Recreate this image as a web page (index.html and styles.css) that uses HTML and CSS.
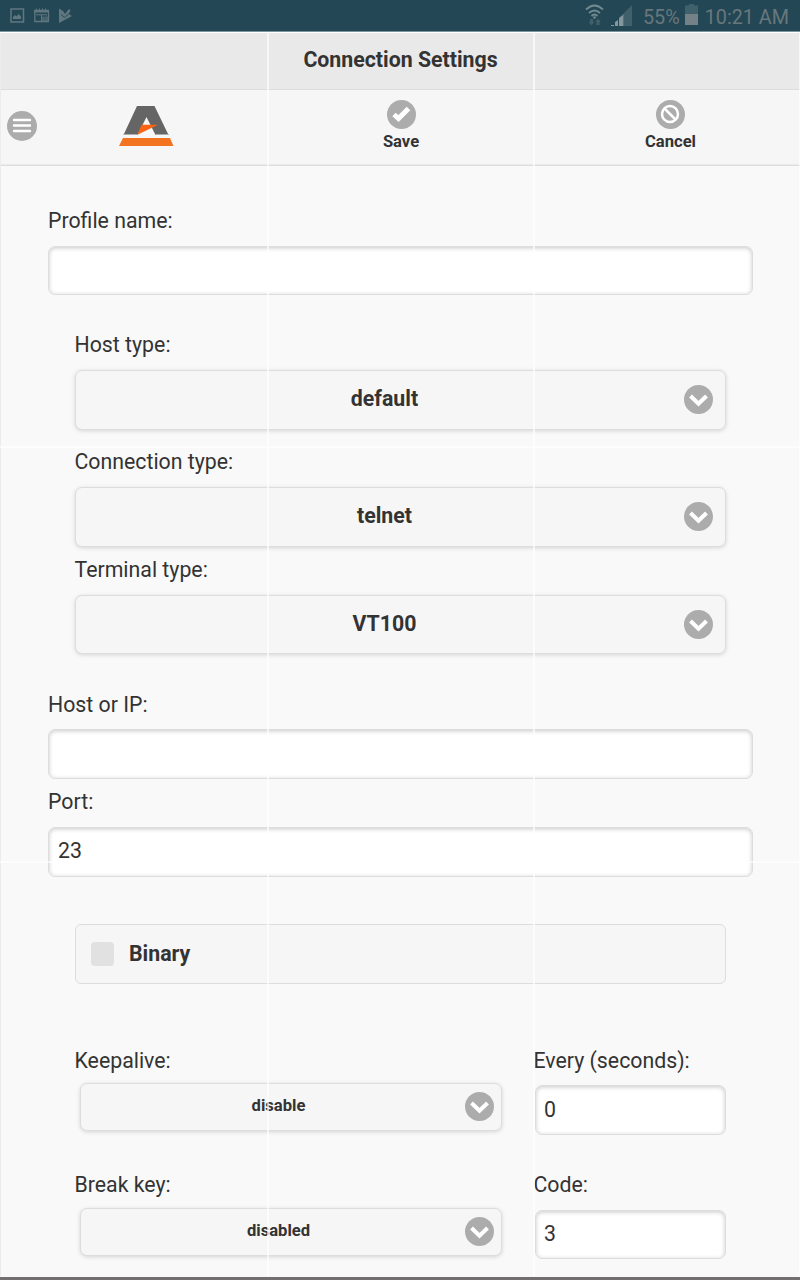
FILE: index.html
```html
<!DOCTYPE html>
<html lang="en">
<head>
<meta charset="utf-8">
<title>Connection Settings</title>
<link rel="stylesheet" href="styles.css">
</head>
<body>
<svg class="defs" width="0" height="0">
  <symbol id="chevron" viewBox="0 0 29 29"><circle cx="14.500" cy="14.500" r="14.500" fill="#acacac"/><path d="m6.500 11 8 7.800 8-7.800" fill="none" stroke="#fff" stroke-width="4"/></symbol>
</svg>
<div class="screen">
  <div class="status">
    <div class="notices">
      <svg width="15" height="15" viewBox="0 0 15 15"><path d="M1 1h12.500v13H1z" fill="none" stroke="#617780" stroke-width="1.500"/><path d="M3 11V9l2-2 1.500 1.500L8.500 6 11 8.500V11z" fill="#617780"/></svg>
      <svg width="16" height="15" viewBox="0 0 16 15"><path d="M.8 2.500h13.700v11H.8z" fill="none" stroke="#617780" stroke-width="1.300"/><path d="M0 2h15v2.500H0zM2 .5h1V2H2zM5 .5h1V2H5zM8 .5h1V2H8zM11 .5h1V2h-1zM2 6.300h11v1H2zM7 7h1v6H7z" fill="#617780"/><path d="M8 8.500h6v5H8z" fill="#617780" opacity=".6"/></svg>
      <svg width="14" height="15" viewBox="0 0 14 15"><path d="M0 .5 4 3l2 3 4-5 1.500 1.500L9.500 6 13 8 0 15z" fill="#617780"/><path d="m2 6.500 3.500 3L9.500 6" fill="none" stroke="#234754"/></svg>
    </div>
    <div class="system">
      <svg class="wifi" width="20" height="22" viewBox="0 0 20 22"><g fill="none" stroke="#728a92" stroke-width="1.800"><path d="M1 5.500q8.500-8 17 0M4 9q5.500-5 11 0M6.500 12q3-3 6 0"/></g><circle cx="9.500" cy="13.500" r="1.300" fill="#728a92"/><path d="M5 15h3v3h1.300l-2.800 3.500L3.700 18H5zM11.500 21v-3h-1.300l2.800-3.500 2.800 3.500h-1.300v3z" fill="#40616c"/></svg>
      <svg class="signal" width="22" height="21" viewBox="0 0 22 21"><path d="M12 9l3-3v15h-3zM15 6l6-6v21h-6z" fill="#40616c"/><path d="M0 20h3v1H0zM4 17l3-2v6H4zM8 13l3-2.500V21H8z" fill="#85979d"/><path d="M11 10.500 12.300 9v12H11z" fill="#85979d"/></svg>
      <span class="percent">55%</span>
      <svg class="battery" width="13" height="21" viewBox="0 0 13 21"><path d="M0 1.500h4V0h5v1.500h4V10H0z" fill="#40616c"/><path d="M0 10h13v11H0z" fill="#748287"/></svg>
      <span>10:21 AM</span>
    </div>
  </div>
  <h1 class="title">Connection Settings</h1>
  <div class="toolbar">
    <div class="brand">
      <svg class="menu" width="30" height="30" viewBox="0 0 30 30"><circle cx="15" cy="15" r="15" fill="#acacac"/><path d="M7 9h16M7 14.500h16M7 20h16" stroke="#fff" stroke-width="2.400" stroke-linecap="round"/></svg>
      <svg class="logo" width="55" height="40" viewBox="0 0 55 40"><path d="M18 0h17.500L49.500 29H36.500L27.500 11 18.500 29H4.500z" fill="#656565"/><path d="M22.500 18.700H39L18.500 28.700z" fill="#fa6513"/><path d="M4.500 28.500h14M36.500 28.500h13" stroke="#a5b0b6" stroke-width="1"/><path d="M4 32h47l3.500 8H0z" fill="#f47321"/></svg>
    </div>
    <div class="action">
      <svg width="29" height="29" viewBox="0 0 29 29"><circle cx="14.500" cy="14.500" r="14.500" fill="#acacac"/><path d="m7 14.500 4.500 4L21.500 8.500" fill="none" stroke="#fff" stroke-width="5"/></svg>
      <span>Save</span>
    </div>
    <div class="action cancel">
      <svg width="29" height="29" viewBox="0 0 29 29"><circle cx="14.500" cy="14.500" r="14.500" fill="#acacac"/><g fill="none" stroke="#fff" stroke-width="2.500"><circle cx="14" cy="14" r="8"/><path d="m8.500 8.500 11 11"/></g></svg>
      <span>Cancel</span>
    </div>
  </div>
  <div class="form">
    <label class="label">Profile name:</label>
    <div class="input profile"></div>
    <div class="inset">
      <label class="label">Host type:</label>
      <div class="select host"><span>default</span><svg class="chev"><use href="#chevron"/></svg></div>
      <label class="label">Connection type:</label>
      <div class="select connection"><span>telnet</span><svg class="chev"><use href="#chevron"/></svg></div>
      <label class="label">Terminal type:</label>
      <div class="select terminal"><span>VT100</span><svg class="chev"><use href="#chevron"/></svg></div>
    </div>
    <label class="label">Host or IP:</label>
    <div class="input address"></div>
    <label class="label">Port:</label>
    <div class="input port">23</div>
    <div class="inset">
      <div class="check"><span class="box"></span>Binary</div>
      <div class="pair">
        <div class="left"><label class="label">Keepalive:</label><div class="select small"><span>disable</span><svg class="chev"><use href="#chevron"/></svg></div></div>
        <div class="right"><label class="label">Every (seconds):</label><div class="input every">0</div></div>
      </div>
      <div class="pair second">
        <div class="left"><label class="label">Break key:</label><div class="select small"><span>disabled</span><svg class="chev"><use href="#chevron"/></svg></div></div>
        <div class="right"><label class="label">Code:</label><div class="input">3</div></div>
      </div>
    </div>
  </div>
  <i class="seam v edge"></i><i class="seam v one"></i><i class="seam v two"></i><i class="seam v last"></i><i class="seam h three"></i><i class="seam h four"></i>
  <div class="bottom"></div>
</div>
</body>
</html>
```
FILE: styles.css
```css
* { box-sizing: border-box; }
body { margin: 0; font-family: Roboto, "Liberation Sans", sans-serif; color: #333; background: #f9f9f9; }
svg { display: block; flex: none; }
.defs { position: absolute; }
.screen { position: relative; width: 800px; height: 1280px; overflow: hidden; display: flex; flex-direction: column; }
.status { flex: none; height: 33px; padding: 0 11px 0 10px; display: flex; justify-content: space-between; background: linear-gradient(#234754 0 31px, #7c949c 31px 32px, #fff 32px); color: #68777d; font-size: 19.8px; line-height: 35px; }
.notices { display: flex; gap: 9px; padding-top: 8px; }
.system { display: flex; }
.wifi { margin-top: 4px; }
.signal { margin: 5px 0 0 6px; }
.percent { margin-left: 10px; }
.battery { margin: 4px 7px 0 5px; }
.title { flex: none; margin: 0; height: 57px; padding-left: 1px; border-bottom: 1px solid #ddd; background: #e9e9e9; text-align: center; font-size: 21.3px; line-height: 53px; font-weight: 700; }
.toolbar { flex: none; height: 76px; padding-left: 1px; display: grid; grid-template-columns: 267px 266px 266px; background: #f6f6f6; border-bottom: 1px solid #ddd; box-shadow: inset 0 -1px #ebebeb; }
.brand { display: flex; padding: 15px 0 0 6px; }
.menu { margin-top: 6px; }
.logo { margin: 1px 0 0 82px; }
.action { display: flex; flex-direction: column; align-items: center; padding-top: 10px; font-size: 16.6px; line-height: 19px; font-weight: 700; }
.action span { margin-top: 3px; }
.cancel { padding-left: 7px; }
.form { padding: 42px 47px 0 48px; }
.label { display: block; font-size: 21.3px; line-height: 26px; }
.input { height: 49px; margin-top: 12px; padding-left: 9px; border: 1px solid #ddd; border-radius: 7px; background: #fff; box-shadow: inset 0 1px 4px rgba(0,0,0,.22); font-size: 21.3px; line-height: 46px; }
.profile { margin-bottom: 37px; }
.inset { padding: 0 27px; }
.inset .label { margin-left: -0.5px; }
.select { height: 60px; margin-top: 12px; padding: 0 12px 1px 0; display: flex; align-items: center; border: 1px solid #ddd; border-radius: 7px; background: #f6f6f6; box-shadow: 0 1px 4px rgba(0,0,0,.15); font-size: 21.3px; font-weight: 700; }
.select span { flex: 1; padding: 0 0 3px 9px; text-align: center; }
.chev { width: 29px; height: 29px; }
.host { margin-bottom: 19px; }
.connection { margin-bottom: 10px; }
.terminal { height: 59px; margin-bottom: 38px; }
.terminal span { padding-bottom: 2px; }
.address { height: 50px; margin-top: 11px; margin-bottom: 10px; }
.port { height: 50px; margin-bottom: 47px; }
.check { height: 60px; display: flex; align-items: center; padding: 0 0 1px 15px; border: 1px solid #ddd; border-radius: 6px; background: #f6f6f6; font-size: 21.3px; font-weight: 700; }
.box { width: 23px; height: 24px; margin-right: 15px; border-radius: 4px; background: #e1e1e1; }
.pair { margin-top: 64px; display: grid; grid-template-columns: 459px 192px; }
.pair.second { margin-top: 37px; }
.left { padding-right: 32px; }
.left .select { height: 48px; margin: 9px 0 0 5px; padding-right: 7px; font-size: 16.6px; }
.left .select span { padding-left: 11px; }
.right .input { margin: 11px 0 0 1px; height: 50px; padding-left: 8px; }
.right .every { line-height: 48px; }
.pair.second .input { height: 49px; margin-top: 12px; }
.pair.second .select { margin-top: 10px; }
.seam { position: absolute; background: rgba(255,255,255,.65); }
.v { top: 33px; bottom: 4px; width: 2px; }
.edge { left: 0; width: 1px; border-right: 1px solid #ececec; }
.one { left: 267px; }
.two { left: 533px; }
.last { left: 799px; width: 1px; }
.h { left: 0; right: 0; height: 2px; }
.three { top: 446px; }
.four { top: 861px; }
.bottom { position: absolute; left: 0; right: 0; bottom: 0; height: 3px; background: #716f70; }
```
